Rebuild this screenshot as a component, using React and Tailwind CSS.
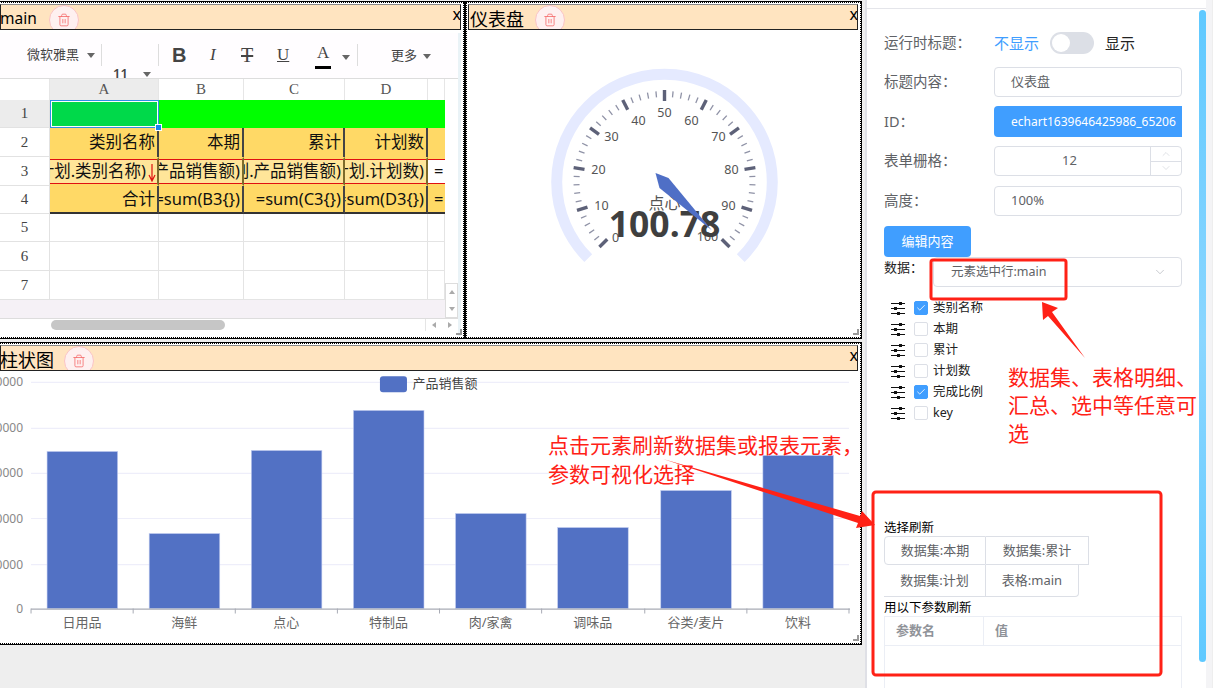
import { Trash2, Check, ChevronDown, ChevronUp } from 'lucide-react'

const cjk = '"Noto Sans", "Noto Sans CJK SC", sans-serif'

const colWidths = [50, 109, 85, 101, 83, 17]

const rows = [
  { h: '2', bg: 'bg-[#ffd966]', cells: ['类别名称', '本期', '累计', '计划数', ''] },
  { h: '3', bg: 'bg-[#ffe599]', cells: ['计划.类别名称)', '产品销售额)', '计划.产品销售额)', '计划.计划数)', '='] },
  { h: '4', bg: 'bg-[#ffd966]', cells: ['合计', '=sum(B3{})', '=sum(C3{})', '=sum(D3{})', '='] },
]

const bars = [
  ['日用品', 47, 451],
  ['海鲜', 149, 533],
  ['点心', 251, 450],
  ['特制品', 353, 410],
  ['肉/家禽', 455, 513],
  ['调味品', 557, 527],
  ['谷类/麦片', 660, 490],
  ['饮料', 762, 455],
]

const yTicks = [
  ['50000', 382],
  ['40000', 428],
  ['30000', 473],
  ['20000', 518],
  ['10000', 564],
  ['0', 608],
]

const fields = [
  ['类别名称', true],
  ['本期', false],
  ['累计', false],
  ['计划数', false],
  ['完成比例', true],
  ['key', false],
]

// label centres read off the dial
const dialLabels = [
  [0, 615, 237],
  [10, 601, 205],
  [20, 598, 169],
  [30, 611, 136],
  [40, 638, 120],
  [50, 664, 112],
  [60, 691, 120],
  [70, 718, 136],
  [80, 731, 169],
  [90, 728, 205],
  [100, 707, 236],
]

function polar(r, v) {
  const a = ((225 - v * 2.7) * Math.PI) / 180
  return [664 + r * Math.cos(a), 182 - r * Math.sin(a)]
}

function Caret({ className = '' }) {
  return <span className={`inline-block w-0 h-0 border-x-[4.5px] border-x-transparent border-t-[5px] border-t-[#666] ${className}`} />
}

function Panel({ title, className, titleClass = '', children }) {
  return (
    <div className={`relative border border-black shrink-0 ${className}`}>
      <div className="h-full border border-dotted border-black bg-white p-[1px] flex flex-col">
        <div className="h-[26px] shrink-0 bg-[#ffe4c0] border border-[#222] border-t-[#888] flex items-center overflow-hidden mr-[1px]">
          <span className={`leading-none text-black mt-[3px] ${titleClass}`}>{title}</span>
          <span className="mt-[6px] w-[30px] h-[30px] shrink-0 rounded-full bg-[#fef0f0] border border-[#fbc4c4] flex items-center justify-center text-[#f56c6c]">
            <Trash2 size={14} strokeWidth={1.4} />
          </span>
          <span className="ml-auto -mr-[1px] -mt-[6px] text-[16px] leading-none text-black">x</span>
        </div>
        {children}
      </div>
      <span className="absolute right-[2px] bottom-[3px] w-[6px] h-[6px] border-r-2 border-b-2 border-[#999]" />
    </div>
  )
}

function Sheet() {
  const grid = 'grid grid-cols-[50px_109px_85px_101px_83px_17px]'
  return (
    <div className="w-[461px] border-r-[3px] border-[#eaf3f7] flex-1 flex flex-col text-black overflow-hidden mt-[3px]">
      <div className="h-[46px] shrink-0 bg-[#fffdff] border-b border-[#ddd] relative flex text-[13px] text-[#444]">
        <div className="w-[101px] flex items-center pl-[27px] h-[44px]">
          微软雅黑<Caret className="ml-[8px]" />
        </div>
        <div className="w-[1px] h-[22px] mt-[11px] bg-[#ddd]" />
        <div className="w-[56px] relative overflow-hidden">
          <span className="absolute left-[11px] top-[31px] text-[13px] font-semibold">11</span>
          <Caret className="absolute left-[41px] top-[39px]" />
        </div>
        <div className="w-[1px] h-[22px] mt-[11px] bg-[#ddd]" />
        <div className="w-[198px] relative text-[17px]" style={{ fontFamily: '"Liberation Serif", serif' }}>
          <span className="absolute left-[13px] top-[12px] text-[20px] font-bold leading-none" style={{ fontFamily: '"Liberation Sans", sans-serif' }}>B</span>
          <span className="absolute left-[51px] top-[13px] italic leading-none">I</span>
          <span className="absolute left-[82px] top-[12px] text-[20px] line-through leading-none">T</span>
          <span className="absolute left-[118px] top-[13px] underline leading-none">U</span>
          <span className="absolute left-[158px] top-[11px] leading-none">A</span>
          <span className="absolute left-[156px] top-[33px] w-[16px] h-[3px] bg-black" />
          <Caret className="absolute left-[183px] top-[22px]" />
        </div>
        <div className="w-[1px] h-[22px] mt-[11px] bg-[#ddd]" />
        <div className="flex items-center pl-[33px] h-[46px]">
          更多<Caret className="ml-[6px]" />
        </div>
      </div>

      <div className="flex">
        <div className="w-[445px]">
          <div className={`${grid} grid-rows-[21px_28px_29px_29px_28px_28px_29px_29px]`} style={{ fontFamily: cjk }}>
            <Header label="" />
            <Header label="A" active />
            <Header label="B" />
            <Header label="C" />
            <Header label="D" />
            <Header label="" />

            <RowHead label="1" active />
            <div className="relative bg-[#00d94a] border border-[#2e8fe8] outline outline-1 -outline-offset-2 outline-white">
              <span className="absolute -right-[4px] -bottom-[4px] w-[7px] h-[7px] bg-[#1a83ee] border border-white z-10" />
            </div>
            <div className="col-span-4 bg-[#00ff00]" />

            {rows.map(r => (
              <Row key={r.h} row={r} />
            ))}

            {['5', '6', '7'].map(n => (
              <EmptyRow key={n} label={n} />
            ))}
          </div>
          <div className="h-[18px] bg-[#f5f1f6]" />
        </div>
        <div className="w-[13px] flex flex-col justify-end">
          <div className="h-[35px] border border-[#ddd] bg-white flex flex-col items-center justify-around">
            <span className="w-0 h-0 border-x-[3px] border-x-transparent border-b-[4px] border-b-[#aaa]" />
            <span className="w-0 h-0 border-x-[3px] border-x-transparent border-t-[4px] border-t-[#aaa]" />
          </div>
        </div>
      </div>

      <div className="h-[13px] shrink-0 flex border-t border-[#ddd]">
        <div className="w-[50px] bg-white" />
        <div className="flex-1 bg-white relative pt-[1px] pl-[1px]">
          <div className="w-[174px] h-[10px] rounded-full bg-[#c6c6c6]" />
        </div>
        <div className="w-[33px] flex items-center justify-around border-l border-[#e5e5e5]">
          <span className="w-0 h-0 border-y-[3px] border-y-transparent border-r-[4px] border-r-[#aaa]" />
          <span className="w-0 h-0 border-y-[3px] border-y-transparent border-l-[4px] border-l-[#aaa]" />
        </div>
      </div>
    </div>
  )
}

function Header({ label, active }) {
  return (
    <div
      className={`flex items-center justify-center text-[15px] text-[#555] border-r border-[#e6e6e6] ${active ? 'bg-[#ececec]' : 'bg-white'}`}
      style={{ fontFamily: '"Liberation Serif", serif' }}
    >
      {label}
    </div>
  )
}

function RowHead({ label, active }) {
  return (
    <div
      className={`flex items-center justify-center text-[15px] text-[#444] border-b border-[#e2e2e2] border-r ${active ? 'bg-[#ececec]' : 'bg-white'}`}
      style={{ fontFamily: '"Liberation Serif", serif' }}
    >
      {label}
    </div>
  )
}

function DataCell({ text, index }) {
  const last = index === 4
  return (
    <div className={`border-y-2 border-y-[#ffd966] min-w-0 ${last ? '' : 'border-r-2 border-r-[#7d6b2c]'}`}>
      <div className={`relative h-full flex items-center overflow-hidden whitespace-nowrap border-y border-y-[#e01010] text-[16.5px] text-[#111] ${last ? 'bg-white justify-start pl-[6px]' : 'bg-[#ffe599] justify-end pr-[2px]'} ${index === 0 ? 'pr-[11px]' : ''}`}>
        {text}
        {index === 0 && (
          <svg className="absolute right-[1px] top-[4px]" width="8" height="18" viewBox="0 0 8 18">
            <path d="M4 0V16M1 11L4 17L7 11" stroke="#e01010" strokeWidth="1.2" fill="none" />
          </svg>
        )}
      </div>
    </div>
  )
}

function Row({ row }) {
  if (row.h === '3') {
    return (
      <>
        <RowHead label={row.h} />
        {row.cells.map((text, i) => (
          <DataCell key={i} text={text} index={i} />
        ))}
      </>
    )
  }
  return (
    <>
      <RowHead label={row.h} />
      {row.cells.map((text, i) => {
        const last = i === 4
        const edge = row.h === '4' ? 'border-b-2 border-b-[#333]' : ''
        return (
          <div
            key={i}
            className={`flex items-center overflow-hidden whitespace-nowrap text-[#111] text-[16.5px] ${row.bg} ${edge} ${last ? 'justify-start pl-[6px]' : 'justify-end pr-[2px] border-r-2 border-r-[#444]'}`}
          >
            {text}
          </div>
        )
      })}
    </>
  )
}

function EmptyRow({ label }) {
  return (
    <>
      <RowHead label={label} />
      {colWidths.slice(1).map((w, i) => (
        <div key={w + '-' + i} className="border-r border-b border-[#e4e4e4] bg-white" />
      ))}
    </>
  )
}

function Gauge() {
  const [sx, sy] = polar(107.8, 0)
  const [ex, ey] = polar(107.8, 100)
  const ticks = []
  for (let v = 0; v <= 100; v += 2) {
    const major = v % 10 === 0
    const [x1, y1] = polar(major ? 92 : 91, v)
    const [x2, y2] = polar(major ? 81 : 85, v)
    ticks.push(
      <line key={v} x1={x1} y1={y1} x2={x2} y2={y2} stroke={major ? '#5d6178' : '#8f92a6'} strokeWidth={major ? 3.4 : 1.3} />
    )
  }
  return (
    <svg className="w-full flex-1 min-h-0" viewBox="468 30 390 306" style={{ fontFamily: cjk }}>
      <path d={`M${sx} ${sy}A107.8 107.8 0 1 1 ${ex} ${ey}`} fill="none" stroke="#e5eaff" strokeWidth="11" />
      {ticks}
      {dialLabels.map(([v, x, y]) => (
        <text key={v} x={x} y={y + 4.5} textAnchor="middle" fontSize="12.5" fill="#555">
          {v}
        </text>
      ))}
      <text x="664" y="209" textAnchor="middle" fontSize="16" fill="#555">点心</text>
      <text x="664" y="237" textAnchor="middle" fontSize="35.5" fontWeight="700" fill="#3f3f3f">100.78</text>
      <polygon points="655,173 668,178 711,230 659,188" fill="#4f6fc6" />
    </svg>
  )
}

function BarChart() {
  return (
    <svg className="w-full flex-1 min-h-0" viewBox="0 371 858 270" style={{ fontFamily: cjk }}>
      {yTicks.slice(0, 5).map(([, y]) => (
        <line key={y} x1="31" x2="848" y1={y} y2={y} stroke="#eeeefa" strokeWidth="1.2" />
      ))}
      {yTicks.map(([t, y]) => (
        <text key={t} x="23" y={y + 4} textAnchor="end" fontSize="12" fill="#888">{t}</text>
      ))}
      {bars.map(([name, x, top]) => (
        <rect key={name} x={x} y={top} width="70.5" height={608 - top} fill="#5271c4" stroke="#c4cef0" strokeWidth="0.6" />
      ))}
      <line x1="31" x2="849" y1="608.5" y2="608.5" stroke="#a8abb5" strokeWidth="1.4" />
      {bars.map(([, x], i) => (
        <line key={i} x1={x - 16} x2={x - 16} y1="608" y2="613" stroke="#a8abb5" />
      ))}
      <line x1="848" x2="848" y1="608" y2="613" stroke="#a8abb5" />
      {bars.map(([name, x]) => (
        <text key={name} x={x + 35} y="626" textAnchor="middle" fontSize="13" fill="#666">{name}</text>
      ))}
      <rect x="379.5" y="376" width="27" height="16" rx="3" fill="#5271c4" />
      <text x="412" y="388" fontSize="13" fill="#444">产品销售额</text>
    </svg>
  )
}

function SliderIcon() {
  return (
    <svg width="14" height="14" viewBox="0 0 14 14" className="shrink-0">
      <path d="M0 2.5H14M0 7.5H14M0 12.5H14" stroke="#111" strokeWidth="1" />
      <rect x="8" y="1" width="3" height="3" fill="#111" />
      <rect x="3" y="6" width="3" height="3" fill="#111" />
      <rect x="6" y="11" width="3" height="3" fill="#111" />
    </svg>
  )
}

function FormRow({ label, className = '', children }) {
  return (
    <div className={`flex items-center ${className}`}>
      <span className="w-[110px] shrink-0 text-[14.5px] text-[#606266]">{label}</span>
      {children}
    </div>
  )
}

function TextBox({ children }) {
  return (
    <div className="w-[188px] h-[30px] border border-[#dcdfe6] rounded-[4px] flex items-center pl-[16px] text-[13px] text-[#606266]">
      {children}
    </div>
  )
}

function Sidebar() {
  return (
    <div className="w-[347px] ml-[1px] border-l-2 border-[#dfe0e6] bg-white h-full flex relative" style={{ fontFamily: cjk }}>
      <div className="w-[330px] shrink-0 flex flex-col">
        <div className="h-[9px] border-b border-[#e4e5ea] mr-[-10px] shrink-0" />
        <div className="pl-[17px] flex flex-col">
          <FormRow label="运行时标题：" className="mt-[23px] h-[22px]">
            <span className="text-[15px] text-[#409eff]">不显示</span>
            <span className="ml-[11px] w-[44px] h-[22px] rounded-full bg-[#dcdfe6] p-[2px]">
              <span className="block w-[18px] h-[18px] rounded-full bg-white" />
            </span>
            <span className="ml-[11px] text-[15px] text-[#222]">显示</span>
          </FormRow>
          <FormRow label="标题内容：" className="mt-[13px]">
            <TextBox>仪表盘</TextBox>
          </FormRow>
          <FormRow label="ID：" className="mt-[9px]">
            <div className="w-[188px] h-[31px] bg-[#409eff] rounded-l-[4px] flex items-center pl-[17px] text-[12px] text-white overflow-hidden whitespace-nowrap">
              echart1639646425986_65206
            </div>
          </FormRow>
          <FormRow label="表单栅格：" className="mt-[9px]">
            <div className="w-[188px] h-[30px] border border-[#dcdfe6] rounded-[4px] flex text-[13px] text-[#606266]">
              <span className="flex-1 flex items-center justify-center pr-[6px]">12</span>
              <span className="w-[31px] border-l border-[#dcdfe6] flex flex-col text-[#c0c4cc]">
                <span className="flex-1 flex items-center justify-center border-b border-[#dcdfe6]"><ChevronUp size={12} strokeWidth={1} /></span>
                <span className="flex-1 flex items-center justify-center"><ChevronDown size={12} strokeWidth={1} /></span>
              </span>
            </div>
          </FormRow>
          <FormRow label="高度：" className="mt-[10px]">
            <TextBox>100%</TextBox>
          </FormRow>
          <div className="mt-[10px] w-[87px] h-[31px] bg-[#409eff] rounded-[4px] flex items-center justify-center text-[13px] text-white">
            编辑内容
          </div>
          <div className="flex">
            <span className="text-[13px] text-[#222] w-[49px] leading-[20px]">数据：</span>
            <div className="w-[249px] h-[30px] border border-[#dcdfe6] rounded-[4px] flex items-center pl-[17px] pr-[14px] text-[12.5px] text-[#606266]">
              元素选中行:main
              <ChevronDown size={14} strokeWidth={1} className="ml-auto text-[#a0a4ac]" />
            </div>
          </div>
          <div className="mt-[14px] ml-[7px] flex flex-col gap-[7px]">
            {fields.map(([name, on]) => (
              <div key={name} className="flex items-center h-[14px]">
                <SliderIcon />
                <span className={`ml-[9px] w-[14px] h-[14px] rounded-[2px] border flex items-center justify-center ${on ? 'bg-[#409eff] border-[#409eff]' : 'bg-white border-[#dcdfe6]'}`}>
                  {on && <Check size={10} strokeWidth={2} className="text-white" />}
                </span>
                <span className="ml-[5px] text-[12.5px] text-[#222]">{name}</span>
              </div>
            ))}
          </div>

          <div className="mt-[100px] text-[12.5px] text-black leading-[16px]">选择刷新</div>
          <div className="flex h-[29px] text-[13px] text-[#606266]">
            <span className="w-[102px] border border-[#dcdfe6] rounded-l-[4px] flex items-center justify-center">数据集:本期</span>
            <span className="w-[103px] border border-l-0 border-[#dcdfe6] flex items-center justify-center">数据集:累计</span>
          </div>
          <div className="flex h-[32px] text-[13px] text-[#606266]">
            <span className="w-[101px] border-b border-[#dcdfe6] flex items-center justify-center">数据集:计划</span>
            <span className="w-[94px] border border-t-0 border-[#dcdfe6] rounded-br-[4px] flex items-center justify-center">表格:main</span>
          </div>
          <div className="mt-[2px] text-[12.5px] text-black leading-[17px]">用以下参数刷新</div>
          <div className="w-[298px] h-[80px] border border-b-0 border-[#ebeef5] text-[13px] font-semibold text-[#909399]">
            <div className="flex h-[29px] border-b border-[#ebeef5]">
              <span className="w-[99px] border-r border-[#ebeef5] flex items-center pl-[11px]">参数名</span>
              <span className="pl-[11px] flex items-center">值</span>
            </div>
          </div>
        </div>
      </div>
      <div className="ml-[2px] w-[7px] h-[652px] mt-[10px] rounded-full bg-gradient-to-b from-[#5fc9ff] via-[#8ad6ff] to-[#5fc9ff]" />
      <div className="flex-1 bg-[#f4f4f6]" />
    </div>
  )
}

function Annotations() {
  return (
    <div className="absolute inset-0 pointer-events-none text-[#ff2116]" style={{ fontFamily: cjk }}>
      <svg className="absolute left-0 top-0" width="1213" height="688" viewBox="0 0 1213 688">
        <rect x="931" y="260" width="135" height="39" rx="2" fill="none" stroke="#ff2116" strokeWidth="3" />
        <rect x="873" y="492" width="288" height="183" rx="3" fill="none" stroke="#ff2116" strokeWidth="3" />
        <polygon points="1042,302 1058,308 1052,312 1085,358 1048,316 1043,320" fill="#ff2116" />
        <polygon points="663,459 860,516 862,511 875,525 856,528 858,523" fill="#ff2116" />
      </svg>
      <div className="absolute left-[548px] top-[431px] text-[21px] leading-[29px] whitespace-nowrap">
        点击元素刷新数据集或报表元素，
        <br />
        参数可视化选择
      </div>
      <div className="absolute left-[1008px] top-[363px] w-[192px] text-[21px] leading-[28px]">
        数据集、表格明细、汇总、选中等任意可选
      </div>
    </div>
  )
}

export default function App() {
  return (
    <div className="relative w-[1213px] h-[688px] overflow-hidden bg-[#eeeeee] flex" style={{ fontFamily: cjk }}>
      <div className="w-[864px] shrink-0 flex flex-col">
        <div className="flex mt-[1px] h-[338px] -ml-[3px]">
          <Panel title="main" titleClass="text-[15.5px] -ml-[1px] mr-[12px]" className="w-[468px] h-[338px]">
            <Sheet />
          </Panel>
          <Panel title="仪表盘" titleClass="text-[18px] ml-[1px] mr-[11px]" className="w-[397px] h-[338px]">
            <Gauge />
          </Panel>
        </div>
        <Panel title="柱状图" titleClass="text-[18px] -ml-[1px] mr-[10px]" className="w-[865px] h-[303px] mt-[3px] -ml-[3px]">
          <BarChart />
        </Panel>
      </div>
      <Sidebar />
      <Annotations />
    </div>
  )
}
